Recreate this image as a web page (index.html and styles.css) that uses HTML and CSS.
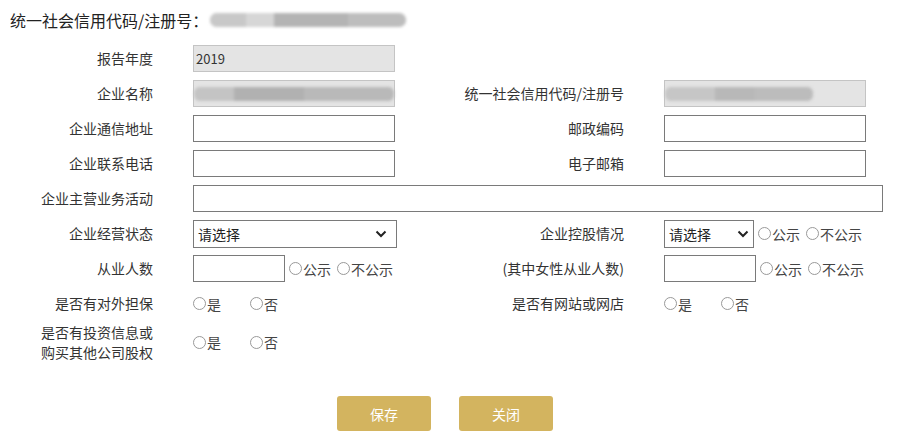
FILE: index.html
```html
<!DOCTYPE html>
<html lang="zh">
<head>
<meta charset="utf-8">
<link rel="stylesheet" href="styles.css">
</head>
<body>
<div class="page">
  <div class="title">
    <span>统一社会信用代码/注册号：</span>
    <span class="blur blur-title"><i class="b1"></i><i class="b2"></i><i class="b3"></i><i class="b4"></i></span>
  </div>

  <div class="form">
    <div class="lbl">报告年度</div>
    <div class="cell"><div class="field ro">2019</div></div>
    <div class="lbl"></div>
    <div class="cell"></div>

    <div class="lbl">企业名称</div>
    <div class="cell"><div class="field ro"><span class="blur blur-name"><i class="b1"></i><i class="b2"></i><i class="b3"></i></span></div></div>
    <div class="lbl">统一社会信用代码/注册号</div>
    <div class="cell"><div class="field ro"><span class="blur blur-code"><i class="b1"></i><i class="b2"></i><i class="b3"></i></span></div></div>

    <div class="lbl">企业通信地址</div>
    <div class="cell"><div class="field"></div></div>
    <div class="lbl">邮政编码</div>
    <div class="cell"><div class="field"></div></div>

    <div class="lbl">企业联系电话</div>
    <div class="cell"><div class="field"></div></div>
    <div class="lbl">电子邮箱</div>
    <div class="cell"><div class="field"></div></div>

    <div class="lbl">企业主营业务活动</div>
    <div class="cell span3"><div class="field wide"></div></div>

    <div class="lbl">企业经营状态</div>
    <div class="cell">
      <div class="select big"><span>请选择</span><svg width="12" height="8" viewBox="0 0 12 8"><path d="M1.5 1.5 L6 6 L10.5 1.5" fill="none" stroke="#222" stroke-width="2"/></svg></div>
    </div>
    <div class="lbl">企业控股情况</div>
    <div class="cell row">
      <div class="select small"><span>请选择</span><svg width="12" height="8" viewBox="0 0 12 8"><path d="M1.5 1.5 L6 6 L10.5 1.5" fill="none" stroke="#222" stroke-width="2"/></svg></div>
      <label class="opt"><i class="radio"></i>公示</label>
      <label class="opt"><i class="radio"></i>不公示</label>
    </div>

    <div class="lbl">从业人数</div>
    <div class="cell row">
      <div class="field short"></div>
      <label class="opt"><i class="radio"></i>公示</label>
      <label class="opt"><i class="radio"></i>不公示</label>
    </div>
    <div class="lbl">(其中女性从业人数)</div>
    <div class="cell row">
      <div class="field short"></div>
      <label class="opt"><i class="radio"></i>公示</label>
      <label class="opt"><i class="radio"></i>不公示</label>
    </div>

    <div class="lbl">是否有对外担保</div>
    <div class="cell row yn">
      <label class="opt"><i class="radio"></i>是</label>
      <label class="opt"><i class="radio"></i>否</label>
    </div>
    <div class="lbl">是否有网站或网店</div>
    <div class="cell row yn">
      <label class="opt"><i class="radio"></i>是</label>
      <label class="opt"><i class="radio"></i>否</label>
    </div>

    <div class="lbl two"><span class="ln">是否有投资信息或</span><span class="ln">购买其他公司股权</span></div>
    <div class="cell row yn">
      <label class="opt"><i class="radio"></i>是</label>
      <label class="opt"><i class="radio"></i>否</label>
    </div>
    <div class="lbl"></div>
    <div class="cell"></div>
  </div>

  <div class="buttons">
    <button class="btn">保存</button>
    <button class="btn">关闭</button>
  </div>
  <div class="bottom"></div>
</div>
</body>
</html>
```

FILE: styles.css
```css
* { box-sizing: border-box; }
html, body { margin: 0; padding: 0; background: #fff; }
body {
  font-family: "Microsoft YaHei", "Noto Sans CJK SC", "Noto Sans", sans-serif;
  color: #333;
  font-size: 14px;
  width: 912px;
  height: 448px;
  overflow: hidden;
}
.page { position: relative; height: 448px; }

.title {
  display: flex;
  align-items: center;
  height: 20px;
  margin: 10px 0 0 10px;
  font-size: 16px;
  color: #222;
  line-height: 20px;
}

.blur { display: flex; align-items: center; filter: blur(1.5px); }
.blur i { display: block; height: 100%; }
.blur-title { height: 14px; width: 196px; margin-left: 2px; border-radius: 7px; overflow: hidden; background: #d4d4d4; }
.blur-title .b1 { width: 36px; background: #c8c8c8; }
.blur-title .b2 { width: 28px; background: #d6d6d6; }
.blur-title .b3 { width: 74px; background: #b4b4b4; }
.blur-title .b4 { width: 58px; background: #bdbdbd; }

.blur-name { height: 14px; width: 200px; margin-left: -2px; border-radius: 6px; overflow: hidden; background: #c9c9c9; }
.blur-name .b1 { width: 40px; background: #c4c4c4; }
.blur-name .b2 { width: 70px; background: #b1b1b1; }
.blur-name .b3 { width: 90px; background: #b9b9b9; }

.blur-code { height: 14px; width: 148px; margin-left: -2px; border-radius: 6px; overflow: hidden; background: #cbcbcb; }
.blur-code .b1 { width: 50px; background: #c6c6c6; }
.blur-code .b2 { width: 40px; background: #b8b8b8; }
.blur-code .b3 { width: 58px; background: #bcbcbc; }

.form {
  display: grid;
  grid-template-columns: 193px 231px 240px 1fr;
  grid-template-rows: repeat(8, 27px) 34px;
  row-gap: 8px;
  margin-top: 15px;
}
.lbl {
  text-align: right;
  padding-right: 40px;
  display: flex;
  align-items: center;
  justify-content: flex-end;
  color: #333;
  white-space: nowrap;
  line-height: 17px;
}
.lbl.two {
  flex-direction: column;
  align-items: flex-start;
  justify-content: center;
  padding-left: 41px;
}
.lbl.two .ln { display: block; height: 20px; line-height: 20px; font-size: 14px; flex-shrink: 0; }
.cell { display: flex; align-items: center; }
.cell.span3 { grid-column: span 3; }
.row { gap: 0; }

.field {
  width: 202px;
  height: 27px;
  border: 1px solid #7a7a7a;
  background: #fff;
  font-size: 13px;
  line-height: 25px;
  padding-left: 2px;
  color: #333;
  display: flex;
  align-items: center;
}
.field.ro { background: #e4e4e4; border-color: #c4c4c4; }
.field.wide { width: 690px; }
.field.short { width: 92px; }

.select {
  height: 28px;
  border: 1px solid #7a7a7a;
  background: #fff;
  display: flex;
  align-items: center;
  justify-content: space-between;
  padding: 0 9px 0 4px;
  font-size: 14px;
  color: #222;
}
.select.big { width: 204px; }
.select.small { width: 90px; padding-right: 4px; }

.opt {
  display: inline-flex;
  align-items: center;
  font-size: 14px;
  color: #444;
  margin-left: 4px;
  white-space: nowrap;
}
.opt + .opt { margin-left: 6px; }
.radio {
  display: inline-block;
  width: 13px;
  height: 13px;
  border: 1px solid #999;
  border-radius: 50%;
  margin-right: 1px;
}
.yn .opt { margin-left: 0; width: 57px; }
.yn .opt + .opt { margin-left: 0; }

.buttons {
  display: flex;
  gap: 28px;
  margin: 37px 0 0 337px;
}
.btn {
  width: 94px;
  height: 35px;
  border: none;
  border-radius: 3px;
  background: #d3b45f;
  color: #fff;
  font-family: inherit;
  font-size: 14px;
  padding: 0;
}
.bottom {
  position: absolute;
  left: 0; right: 0; bottom: 0;
  height: 5px;
  background: linear-gradient(#fff, #f7f6ee);
}
```
